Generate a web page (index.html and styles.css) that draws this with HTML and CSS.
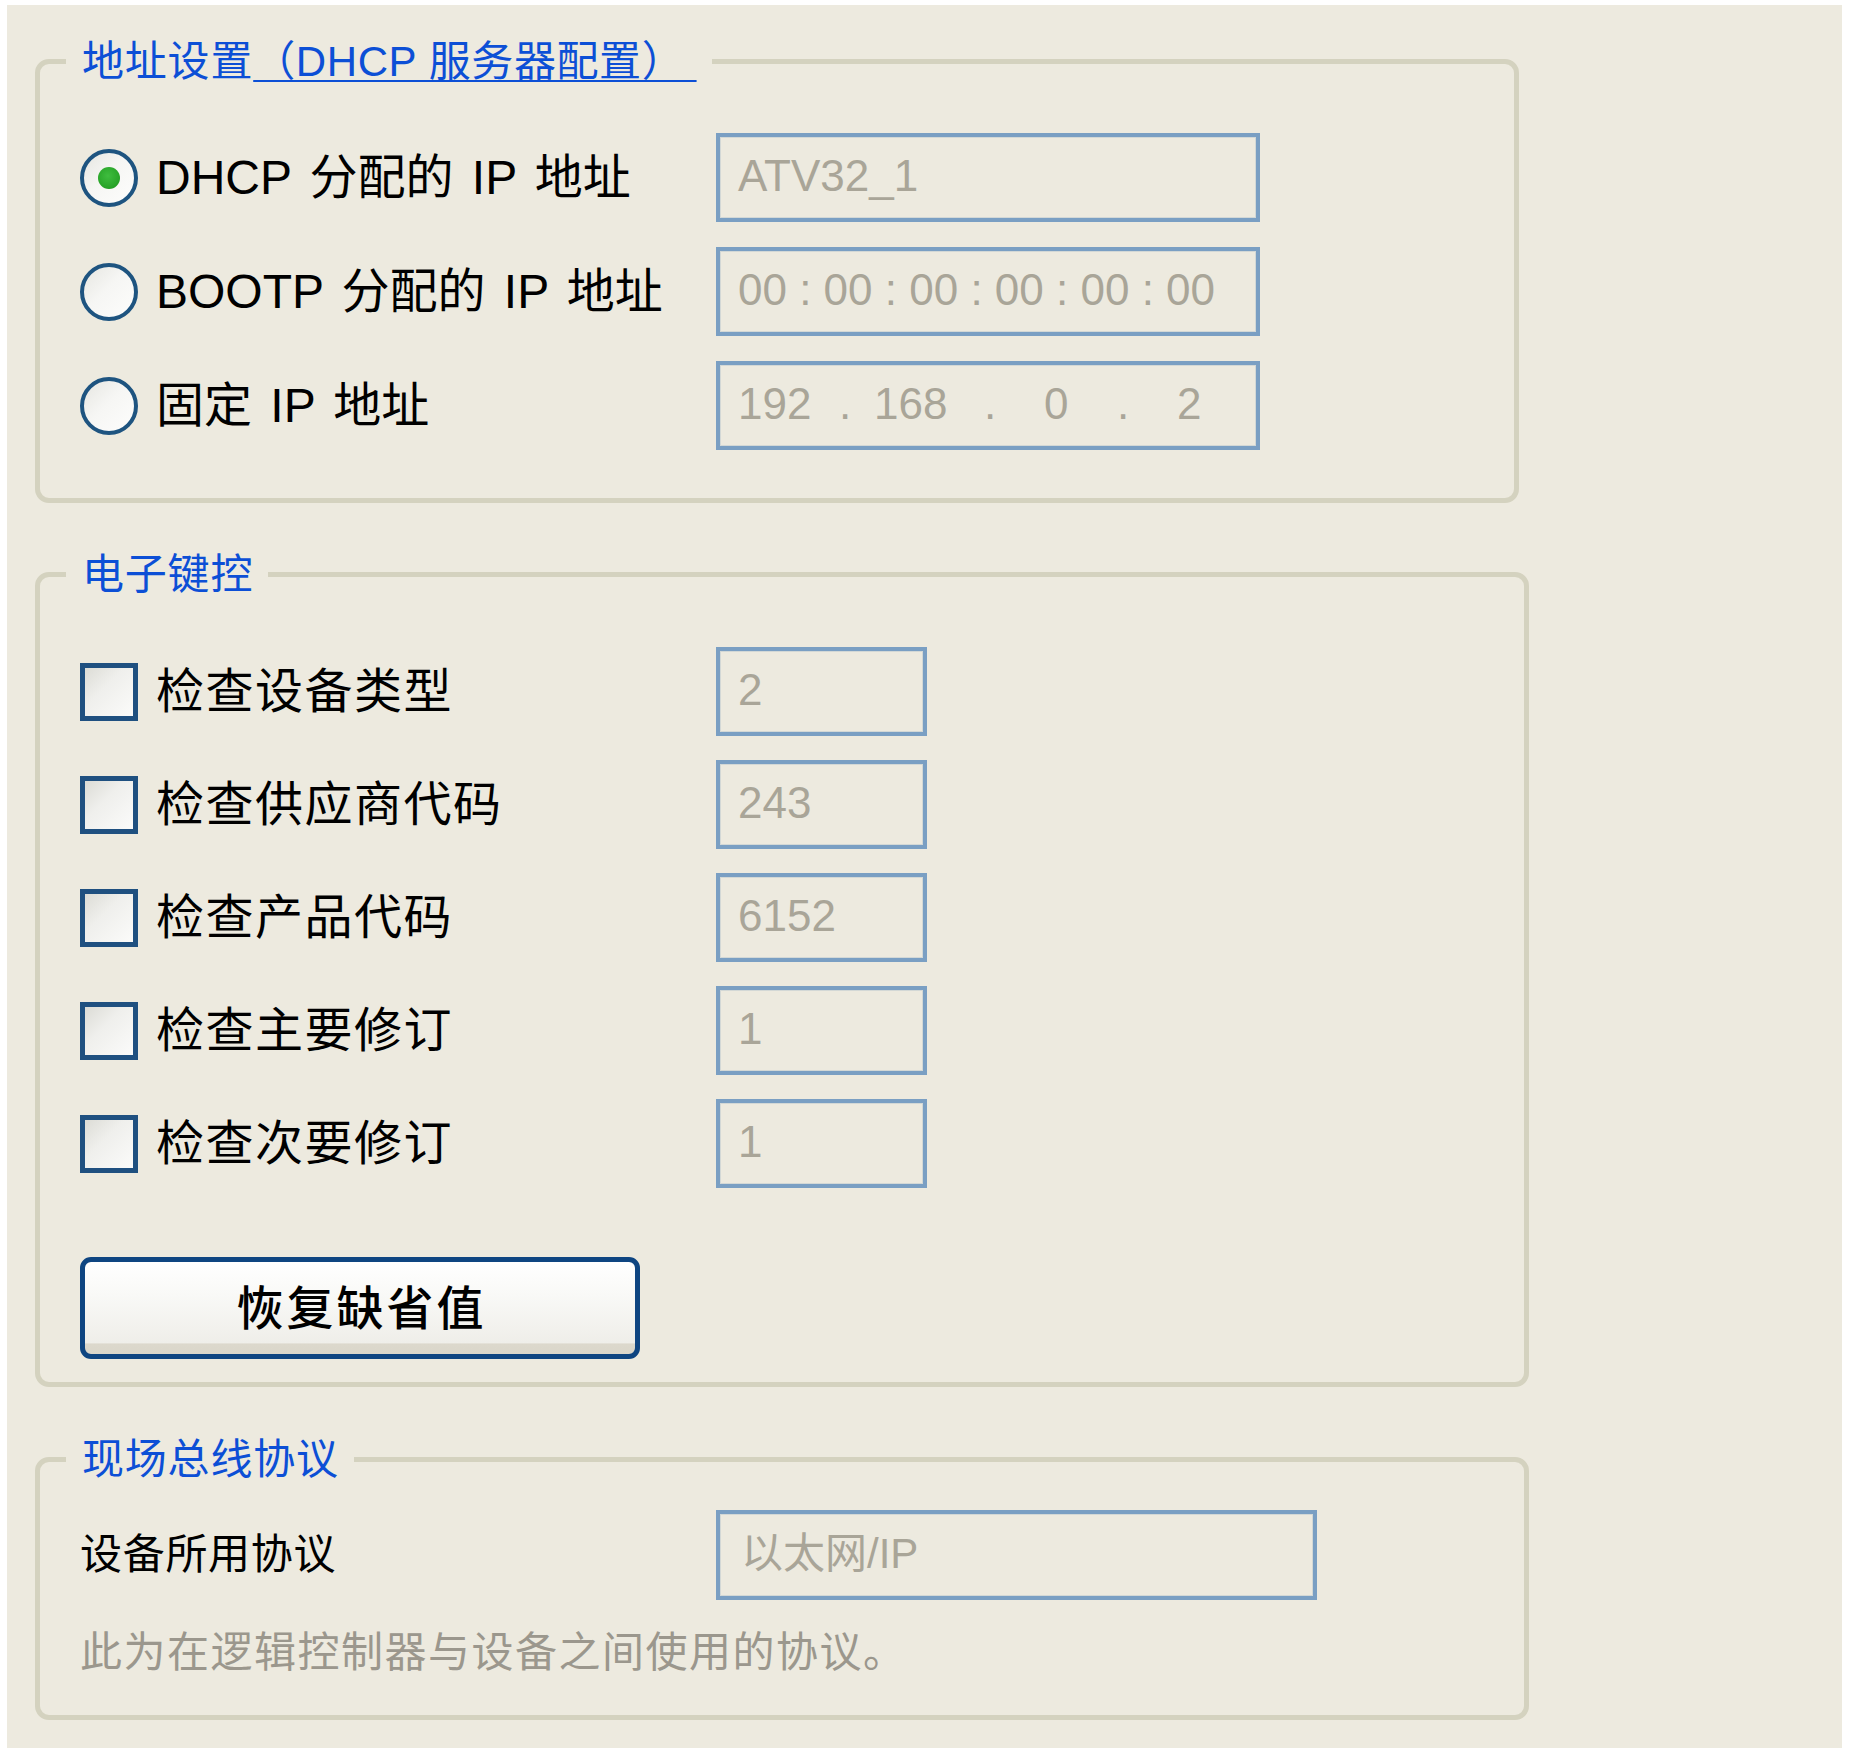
FILE: index.html
```html
<!DOCTYPE html>
<html lang="zh-CN">
<head>
<meta charset="utf-8">
<title>设备配置</title>
<link rel="stylesheet" href="styles.css">
</head>
<body>
<div class="panel">
  <fieldset class="group group-addr">
    <legend class="legend">地址设置<a class="legend-link">（DHCP 服务器配置）&nbsp;</a></legend>
    <div class="rows rows-addr">
      <div class="row">
        <span class="radio is-checked"><span class="radio-dot"></span></span>
        <span class="label label-sans">DHCP 分配的 IP 地址</span>
        <div class="field field-wide">ATV32_1</div>
      </div>
      <div class="row">
        <span class="radio"></span>
        <span class="label label-sans">BOOTP 分配的 IP 地址</span>
        <div class="field field-wide">00 : 00 : 00 : 00 : 00 : 00</div>
      </div>
      <div class="row">
        <span class="radio"></span>
        <span class="label label-sans">固定 IP 地址</span>
        <div class="field field-wide field-ip">
          <span>192</span><span>.</span><span>168</span><span>.</span><span>0</span><span>.</span><span>2</span>
        </div>
      </div>
    </div>
  </fieldset>

  <fieldset class="group group-key">
    <legend class="legend">电子键控</legend>
    <div class="rows rows-key">
      <div class="row">
        <span class="checkbox"></span>
        <span class="label">检查设备类型</span>
        <div class="field field-small">2</div>
      </div>
      <div class="row">
        <span class="checkbox"></span>
        <span class="label">检查供应商代码</span>
        <div class="field field-small">243</div>
      </div>
      <div class="row">
        <span class="checkbox"></span>
        <span class="label">检查产品代码</span>
        <div class="field field-small">6152</div>
      </div>
      <div class="row">
        <span class="checkbox"></span>
        <span class="label">检查主要修订</span>
        <div class="field field-small">1</div>
      </div>
      <div class="row">
        <span class="checkbox"></span>
        <span class="label">检查次要修订</span>
        <div class="field field-small">1</div>
      </div>
    </div>
    <div class="actions">
      <button class="button" type="button">恢复缺省值</button>
    </div>
  </fieldset>

  <fieldset class="group group-proto">
    <legend class="legend">现场总线协议</legend>
    <div class="proto">
      <div class="row row-proto">
        <span class="label label-plain">设备所用协议</span>
        <div class="field field-proto">以太网/IP</div>
      </div>
      <p class="note">此为在逻辑控制器与设备之间使用的协议。</p>
    </div>
  </fieldset>
</div>
</body>
</html>
```

FILE: styles.css
```css
html, body {
  margin: 0;
  padding: 0;
  background: #ffffff;
}

body {
  font-family: "Liberation Sans", "Noto Sans CJK SC", sans-serif;
  color: #000000;
}

.panel {
  box-sizing: border-box;
  width: 1835px;
  margin: 5px 0 0 7px;
  padding: 31px 0 28px 28px;
  background: #edeadf;
}

.group {
  box-sizing: border-box;
  margin: 0;
  padding: 0;
  border: 5px solid #d4d2bf;
  border-radius: 14px;
  min-inline-size: 0;
}

.group-addr {
  width: 1484px;
}

.group-key {
  width: 1494px;
  margin-top: 46px;
}

.group-proto {
  width: 1494px;
  margin-top: 47px;
}

.legend {
  margin-left: 26px;
  padding: 0 15px 0 16px;
  font-size: 42px;
  line-height: 51px;
  letter-spacing: 0.8px;
  color: #0c4fd6;
  white-space: nowrap;
}

.legend-link {
  color: #0c4fd6;
  letter-spacing: 0.6px;
  text-decoration: underline;
  text-decoration-thickness: 2px;
  text-underline-offset: 4px;
}

.rows {
  display: flex;
  flex-direction: column;
  padding-left: 40px;
}

.rows-addr {
  gap: 25px;
  padding-top: 46px;
  padding-bottom: 48px;
}

.rows-key {
  gap: 24px;
  padding-top: 47px;
}

.row {
  display: flex;
  align-items: center;
  height: 89px;
}

.radio {
  box-sizing: border-box;
  flex: 0 0 58px;
  width: 58px;
  height: 58px;
  border: 4px solid #1e5480;
  border-radius: 50%;
  background: linear-gradient(135deg, #e6e6e1 0%, #f6f6f4 45%, #fdfdfc 100%);
  display: flex;
  align-items: center;
  justify-content: center;
}

.radio-dot {
  width: 22px;
  height: 22px;
  border-radius: 50%;
  background: radial-gradient(circle at 45% 40%, #3fbd3f 0%, #2aa62a 60%, #1a901a 100%);
}

.checkbox {
  box-sizing: border-box;
  flex: 0 0 58px;
  width: 58px;
  height: 58px;
  border: 5px solid #1f5080;
  background: linear-gradient(135deg, #dcdcd6 0%, #efefec 40%, #fbfbfa 100%);
}

.label {
  box-sizing: border-box;
  flex: 0 0 560px;
  margin-left: 18px;
  font-size: 48px;
  line-height: 58px;
  letter-spacing: 1.5px;
  white-space: nowrap;
}

.label-sans {
  letter-spacing: 0;
  word-spacing: 5px;
}

.label-plain {
  flex: 0 0 636px;
  margin-left: 0;
  font-size: 42px;
  line-height: 52px;
  letter-spacing: 0.7px;
}

.field {
  box-sizing: border-box;
  height: 89px;
  border: 4px solid #7a9fc3;
  box-shadow: inset 0 0 0 1px #d3d8d6;
  background: #edeadf;
  padding: 0 0 3px 18px;
  display: flex;
  align-items: center;
  font-size: 44px;
  line-height: 44px;
  color: #a9a598;
  white-space: nowrap;
}

.field-wide {
  width: 544px;
}

.field-small {
  width: 211px;
}

.field-ip {
  display: grid;
  grid-template-columns: 101px 35px 110px 60px 73px 60px auto;
  align-items: center;
  align-content: center;
}

.field-proto {
  width: 601px;
  height: 90px;
  padding-left: 21px;
  font-size: 42px;
  line-height: 42px;
}

.actions {
  padding: 69px 0 23px 40px;
}

.button {
  box-sizing: border-box;
  display: flex;
  align-items: center;
  justify-content: center;
  width: 560px;
  height: 102px;
  margin: 0;
  padding: 0 0 0 3px;
  border: 5px solid #0e4581;
  border-radius: 11px;
  background: linear-gradient(180deg, #ffffff 0%, #f9f9f7 35%, #efeee9 88%, #dcd8cc 89%, #dad6ca 100%);
  font-family: "Liberation Sans", "Noto Sans CJK SC", sans-serif;
  font-size: 47px;
  line-height: 47px;
  font-weight: 500;
  letter-spacing: 3px;
  color: #000000;
}

.proto {
  padding: 25px 0 37px 40px;
}

.row-proto {
  height: 90px;
}

.note {
  margin: 28px 0 0 0;
  font-size: 42px;
  line-height: 50px;
  letter-spacing: 1.5px;
  color: #9b978d;
  white-space: nowrap;
}
```
